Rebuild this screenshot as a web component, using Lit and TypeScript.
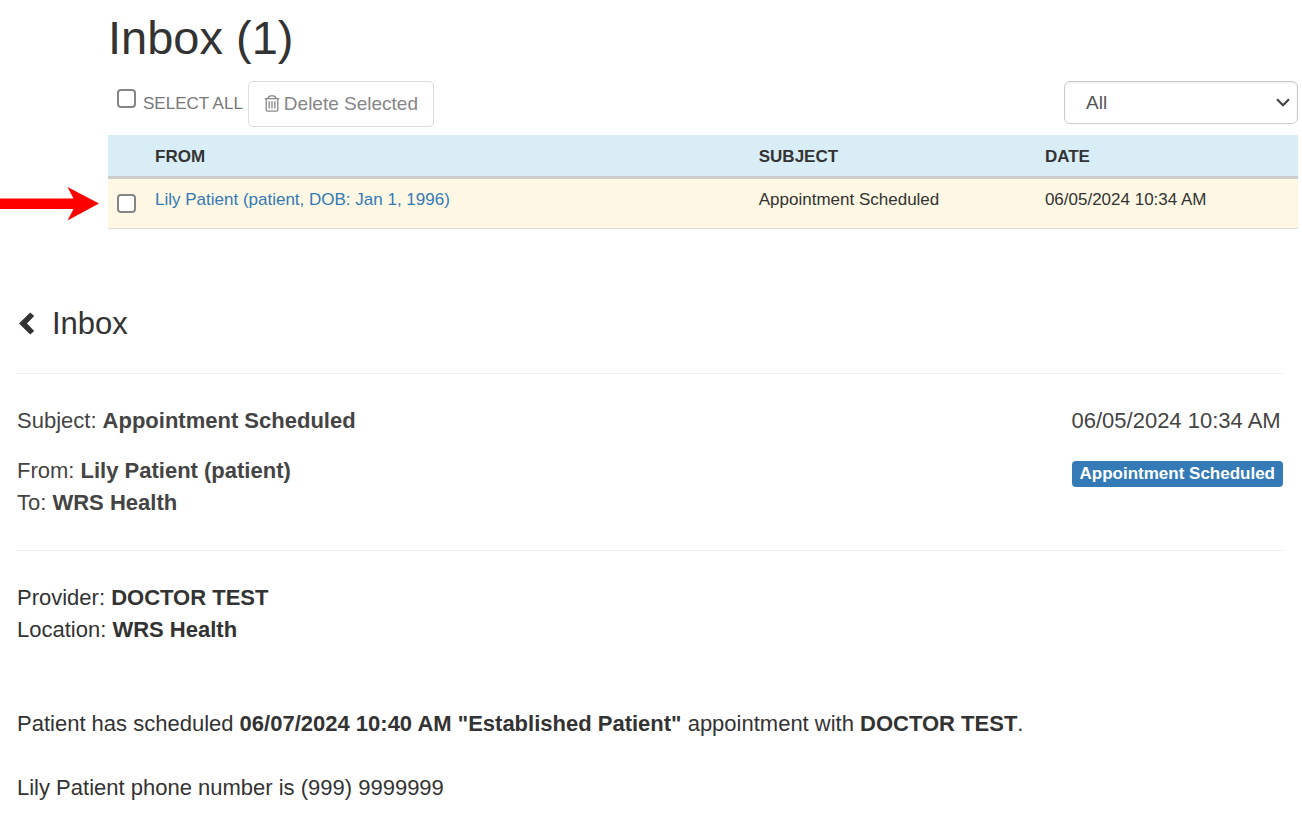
import { LitElement, html, css } from "lit";
import { customElement, state } from "lit/decorators.js";

interface Message {
  id: number;
  from: string;
  subject: string;
  date: string;
}

@customElement("inbox-list")
export class InboxList extends LitElement {
  static styles = css`
    :host {
      display: block;
      color: #333;
      font-size: 17px;
      line-height: 24px;
    }
    .title {
      margin: 0;
      font-size: 47px;
      font-weight: 400;
      line-height: 52px;
    }
    .toolbar {
      display: flex;
      justify-content: space-between;
      align-items: flex-start;
      margin: 17px 0 8px;
    }
    .actions {
      display: flex;
      align-items: flex-start;
      gap: 5px;
      color: #777;
    }
    .select-all {
      display: flex;
      gap: 7px;
      padding: 8px 0 0 9px;
    }
    .select-all-text {
      padding-top: 3px;
    }
    .check {
      appearance: none;
      display: block;
      flex: none;
      box-sizing: border-box;
      width: 19px;
      height: 19px;
      margin: 0;
      border: 2px solid #858585;
      border-radius: 4px;
      background: #fff;
    }
    .check:checked {
      background: #337ab7;
    }
    .delete {
      display: flex;
      align-items: center;
      gap: 4px;
      padding: 9px 15px;
      border: 1px solid #ddd;
      border-radius: 5px;
      background: #fff;
      color: #868686;
      font: inherit;
      font-size: 19px;
      line-height: 26px;
    }
    .trash {
      display: block;
      width: 16px;
      height: 17px;
      margin-bottom: 2px;
    }
    .filter {
      display: grid;
      width: 234px;
      align-items: center;
    }
    .filter-select,
    .chevron {
      grid-area: 1 / 1;
    }
    .filter-select {
      appearance: none;
      width: 100%;
      padding: 9px 21px 8px;
      border: 1px solid #ccc;
      border-radius: 6px;
      background: #fff;
      box-shadow: inset 0 1px 2px rgba(0, 0, 0, 0.08);
      color: #555;
      font: inherit;
      font-size: 19px;
      line-height: 24px;
    }
    .chevron {
      justify-self: end;
      width: 14px;
      height: 9px;
      margin-right: 8px;
      pointer-events: none;
    }
    .messages {
      width: 100%;
      table-layout: fixed;
      border-collapse: collapse;
    }
    .messages th,
    .messages td {
      padding: 9px 8px 8px;
      text-align: left;
      vertical-align: top;
    }
    .messages th {
      padding: 10px 8px 7px;
      background: #d9edf7;
      border-bottom: 3px solid #ccc;
    }
    .messages td {
      height: 32px;
      background: #fdf7e3;
      border-bottom: 1px solid #ddd;
    }
    .messages .pick {
      width: 30px;
      padding: 15px 0 0 9px;
    }
    .messages th.pick {
      padding-top: 0;
    }
    .messages .col-subject {
      width: 22.7%;
    }
    .messages .col-date {
      width: 20.6%;
    }
    .link {
      color: #337ab7;
      text-decoration: none;
    }
  `;

  @state() private selected = false;

  private messages: Message[] = [
    {
      id: 1,
      from: "Lily Patient (patient, DOB: Jan 1, 1996)",
      subject: "Appointment Scheduled",
      date: "06/05/2024 10:34 AM",
    },
  ];

  private toggle(e: Event) {
    this.selected = (e.target as HTMLInputElement).checked;
  }

  render() {
    return html`
      <h1 class="title">Inbox (${this.messages.length})</h1>
      <div class="toolbar">
        <div class="actions">
          <label class="select-all">
            <input class="check" type="checkbox" .checked=${this.selected} @change=${this.toggle} />
            <span class="select-all-text">SELECT ALL</span>
          </label>
          <button class="delete" type="button">
            <svg class="trash" viewBox="0 0 16 17" fill="none" stroke="#868686" stroke-width="1.3" aria-hidden="true">
              <path d="M0.7 3.6H15.3M4.2 3.4C4.4 1.6 5.2 0.8 6.6 0.8H9.4C10.8 0.8 11.6 1.6 11.8 3.4M2.2 4V14.4Q2.2 16.2 4 16.2H12Q13.8 16.2 13.8 14.4V4" />
              <path d="M5.2 6.2V13.4M8 6.2V13.4M10.8 6.2V13.4" />
            </svg>
            Delete Selected
          </button>
        </div>
        <div class="filter">
          <select class="filter-select" aria-label="Filter messages">
            <option>All</option>
          </select>
          <svg class="chevron" viewBox="0 0 14 9" fill="none" stroke="#444" stroke-width="2.2" aria-hidden="true">
            <path d="M1 1.2L7 7.2L13 1.2" />
          </svg>
        </div>
      </div>
      <table class="messages">
        <thead>
          <tr>
            <th class="pick" aria-label="Select"></th>
            <th>FROM</th>
            <th class="col-subject">SUBJECT</th>
            <th class="col-date">DATE</th>
          </tr>
        </thead>
        <tbody>
          ${this.messages.map(
            (m) => html`
              <tr>
                <td class="pick">
                  <input
                    class="check"
                    type="checkbox"
                    aria-label=${m.subject}
                    .checked=${this.selected}
                    @change=${this.toggle}
                  />
                </td>
                <td><a class="link" href="#message-${m.id}">${m.from}</a></td>
                <td>${m.subject}</td>
                <td>${m.date}</td>
              </tr>
            `
          )}
        </tbody>
      </table>
    `;
  }
}

@customElement("message-detail")
export class MessageDetail extends LitElement {
  static styles = css`
    :host {
      display: block;
      color: #333;
      font-size: 22px;
      line-height: 32px;
    }
    .heading {
      margin: 0;
      font-size: 31px;
      font-weight: 400;
      line-height: 36px;
    }
    .back {
      display: flex;
      align-items: center;
      gap: 17px;
      width: fit-content;
      padding-left: 2px;
      color: #333;
      text-decoration: none;
    }
    .back-icon {
      width: 16px;
      height: 23px;
      margin-bottom: 2px;
    }
    .rule {
      height: 0;
      margin: 31px 0;
      border: 0;
      border-top: 1px solid #eee;
    }
    .meta {
      display: grid;
      grid-template-columns: 1fr auto;
      row-gap: 18px;
      color: #444;
    }
    .line {
      margin: 0;
    }
    .badge {
      justify-self: end;
      align-self: start;
      margin-top: 6px;
      padding: 0 8px;
      border-radius: 4px;
      background: #337ab7;
      color: #fff;
      font-size: 17px;
      font-weight: 700;
      line-height: 26px;
    }
    .text {
      margin: 62px 0 0;
    }
    .text + .text {
      margin-top: 32px;
    }
  `;

  render() {
    return html`
      <h2 class="heading">
        <a class="back" href="#inbox">
          <svg class="back-icon" viewBox="0 0 16 23" aria-hidden="true">
            <path fill="#333" d="M11.2 0.4L15.2 3.9L8 11.4L15.2 18.9L11.2 22.6L0 11.4Z" />
          </svg>
          Inbox
        </a>
      </h2>
      <hr class="rule" />
      <div class="meta">
        <p class="line">Subject: <b>Appointment Scheduled</b></p>
        <time class="line">06/05/2024 10:34 AM</time>
        <div>
          <p class="line">From: <b>Lily Patient (patient)</b></p>
          <p class="line">To: <b>WRS Health</b></p>
        </div>
        <span class="badge">Appointment Scheduled</span>
      </div>
      <hr class="rule" />
      <p class="line">Provider: <b>DOCTOR TEST</b></p>
      <p class="line">Location: <b>WRS Health</b></p>
      <p class="text">
        Patient has scheduled <b>06/07/2024 10:40 AM "Established Patient"</b> appointment with
        <b>DOCTOR TEST</b>.
      </p>
      <p class="text">Lily Patient phone number is (999) 9999999</p>
    `;
  }
}

@customElement("app-root")
export class AppRoot extends LitElement {
  static styles = css`
    :host {
      display: block;
      min-height: 100vh;
      background: #fff;
      font-family: "Liberation Sans", Arial, sans-serif;
    }
    .inbox {
      display: grid;
      grid-template-columns: 100px 1fr;
      column-gap: 8px;
      padding: 12px 4px 0 0;
    }
    .arrow {
      align-self: end;
      width: 100px;
      height: 36px;
      margin-bottom: 7px;
    }
    .detail {
      padding: 77px 19px 24px 17px;
    }
  `;

  render() {
    return html`
      <main>
        <section class="inbox">
          <svg class="arrow" viewBox="0 0 100 36" aria-hidden="true">
            <path fill="#f00" d="M0 12.5H73.5L67.5 1L99 17.5L67.5 34.5L73.5 23H0Z" />
          </svg>
          <inbox-list></inbox-list>
        </section>
        <section class="detail">
          <message-detail></message-detail>
        </section>
      </main>
    `;
  }
}
